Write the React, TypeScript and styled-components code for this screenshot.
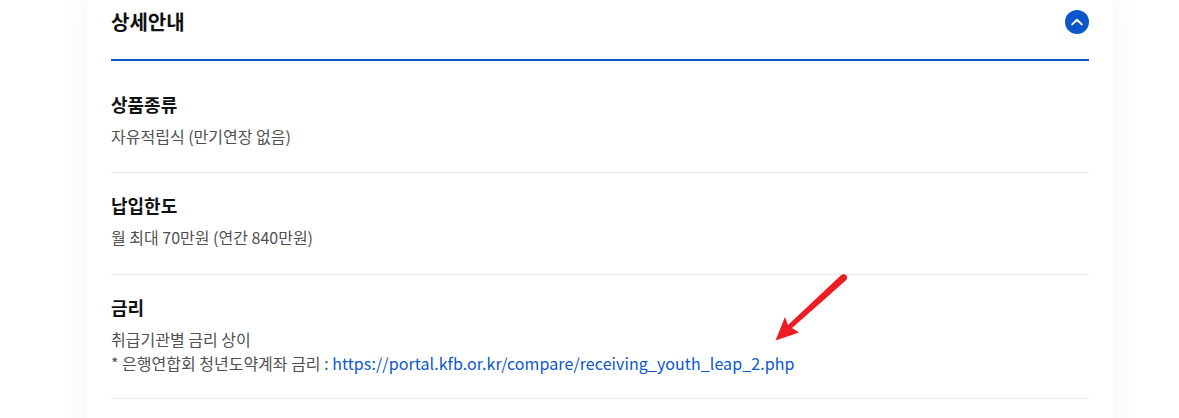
import * as React from 'react'
import styled, { createGlobalStyle } from 'styled-components'

const GlobalStyle = createGlobalStyle`
  html, body {
    margin: 0;
    padding: 0;
    background: #fff;
    font-family: "Noto Sans CJK KR", "Noto Sans", sans-serif;
  }
`

const Page = styled.div`
  position: relative;
  width: 1179px;
  height: 418px;
  overflow: hidden;
  background: #fff;
`

const Card = styled.div`
  width: 1026px;
  height: 460px;
  box-sizing: border-box;
  margin: -6px 0 0 87px;
  padding: 6px 24px 0;
  background: #fff;
  border-radius: 10px;
  box-shadow: 0 0 32px rgba(0, 0, 0, 0.055);
`

const Header = styled.div`
  display: flex;
  align-items: center;
  justify-content: space-between;
  height: 44px;
  padding-bottom: 15px;
  border-bottom: 2px solid #0b57c9;
`

const Title = styled.h2`
  margin: 0;
  font-size: 20px;
  line-height: 44px;
  font-weight: 700;
  color: #111;
`

const Toggle = styled.span`
  display: flex;
  align-items: center;
  justify-content: center;
  width: 24px;
  height: 24px;
  border-radius: 50%;
  background: #0b57c9;
`

const Section = styled.div<{ $height: number; $top: number }>`
  box-sizing: border-box;
  height: ${({ $height }) => $height}px;
  padding-top: ${({ $top }) => $top}px;
  border-bottom: 1px solid #ebebeb;
`

const Label = styled.h3`
  margin: 0 0 6px;
  font-size: 18px;
  line-height: 28px;
  font-weight: 700;
  color: #111;
`

const Text = styled.p`
  margin: 0;
  font-size: 16px;
  line-height: 24px;
  color: #505050;
`

const Link = styled.a`
  color: #0b57c9;
  letter-spacing: 0.08px;
  text-decoration: none;
`

const Arrow = styled.svg`
  position: absolute;
  left: 770px;
  top: 270px;
`

const App = () => (
  <Page>
    <GlobalStyle />
    <Card>
      <Header>
        <Title>상세안내</Title>
        <Toggle>
          <svg width="14" height="14" viewBox="0 0 14 14" fill="none">
            <path d="M2.2 9.400 7 4.800l4.800 4.600" stroke="#fff" strokeWidth="2" strokeLinecap="round" strokeLinejoin="round" />
          </svg>
        </Toggle>
      </Header>
      <Section $height={112} $top={29}>
        <Label>상품종류</Label>
        <Text>자유적립식 (만기연장 없음)</Text>
      </Section>
      <Section $height={102} $top={18}>
        <Label>납입한도</Label>
        <Text>월 최대 70만원 (연간 840만원)</Text>
      </Section>
      <Section $height={124} $top={18}>
        <Label>금리</Label>
        <Text>취급기관별 금리 상이</Text>
        <Text>
          * 은행연합회 청년도약계좌 금리 : <Link>https://portal.kfb.or.kr/compare/receiving_youth_leap_2.php</Link>
        </Text>
      </Section>
    </Card>
    <Arrow width="90" height="80" viewBox="0 0 90 80" fill="none">
      <path
        d="M71 5.2C72.500 3.800 75 3.800 76.300 5.400 77.500 7 77.300 9.200 75.800 10.600L22 58l7 4.500L5.500 70.500 15 47l3 8z"
        fill="#ee1c25"
      />
    </Arrow>
  </Page>
)

export default App
